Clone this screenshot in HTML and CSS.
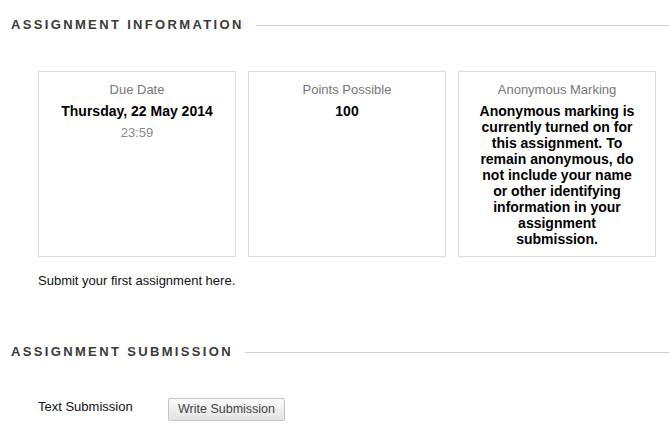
FILE: index.html
```html
<!DOCTYPE html>
<html lang="en">
<head>
    <meta charset="UTF-8">
    <meta name="viewport" content="width=device-width, initial-scale=1.0">
    <title>Assignment</title>
    <link rel="stylesheet" href="styles.css">
</head>
<body>
    <div class="page">
        <h2 class="section-title"><span>Assignment Information</span></h2>

        <div class="section-body">
            <div class="info-grid">
                <div class="info-box">
                    <div class="info-label">Due Date</div>
                    <div class="info-value">Thursday, 22 May 2014</div>
                    <div class="info-sub">23:59</div>
                </div>
                <div class="info-box">
                    <div class="info-label">Points Possible</div>
                    <div class="info-value">100</div>
                </div>
                <div class="info-box">
                    <div class="info-label">Anonymous Marking</div>
                    <div class="info-value">Anonymous marking is currently turned on for this assignment. To remain anonymous, do not include your name or other identifying information in your assignment submission.</div>
                </div>
            </div>

            <p class="instructions">Submit your first assignment here.</p>
        </div>

        <h2 class="section-title second"><span>Assignment Submission</span></h2>

        <div class="section-body">
            <div class="field-row">
                <div class="field-label">Text Submission</div>
                <button type="button" class="btn">Write Submission</button>
            </div>
        </div>
    </div>
</body>
</html>
```

FILE: styles.css
```css
body {
    margin: 0;
    font-family: "Liberation Sans", Arial, sans-serif;
    font-size: 13px;
    line-height: 16px;
    color: #111;
    background: #fff;
}
.page {
    padding: 17px 0 0 0;
}
.section-title {
    display: flex;
    align-items: center;
    margin: 0;
    padding-left: 11px;
    font-size: 13px;
    line-height: 16px;
    font-weight: bold;
    text-transform: uppercase;
    letter-spacing: 2.35px;
    color: #3a3a3a;
}
.section-title::after {
    content: "";
    flex: 1;
    height: 1px;
    margin-left: 12px;
    background-color: #cfcfcf;
}
.section-title.second {
    margin-top: 55px;
}
.section-body {
    padding: 0 13px 0 38px;
}
.info-grid {
    display: grid;
    grid-template-columns: repeat(3, 1fr);
    gap: 12px;
    margin-top: 38px;
}
.info-box {
    border: 1px solid #dcdcdc;
    padding: 10px 18px 9px;
    text-align: center;
}
.info-label {
    color: #777;
}
.info-value {
    margin-top: 5px;
    font-size: 14px;
    font-weight: bold;
    color: #000;
}
.info-sub {
    margin-top: 6px;
    color: #888;
}
.instructions {
    margin: 16px 0 0 0;
    color: #111;
}
.field-row {
    display: flex;
    align-items: flex-start;
    margin-top: 38px;
}
.field-label {
    width: 130px;
    padding-top: 1px;
    color: #111;
}
.btn {
    font-family: "Liberation Sans", Arial, sans-serif;
    font-size: 12.5px;
    line-height: 15px;
    color: #444;
    padding: 3px 9px;
    height: 23px;
    border: 1px solid #c4c4c4;
    border-radius: 2px;
    background: linear-gradient(#fafafa, #e3e3e3);
    cursor: pointer;
}
```
